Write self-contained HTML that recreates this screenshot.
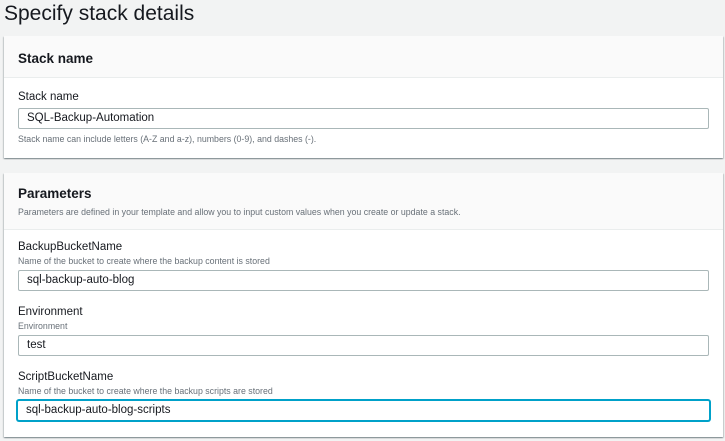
<!DOCTYPE html>
<html><head><style>
*{margin:0;padding:0;box-sizing:border-box}
body{width:725px;height:441px;background:#f2f3f3;font-family:"Liberation Sans",sans-serif;color:#16191f;position:relative;overflow:hidden}
.a{position:absolute;white-space:nowrap}
.card{position:absolute;left:4px;width:719px;background:#fff;box-shadow:0 1px 1px rgba(0,28,36,.3),1px 1px 1px rgba(0,28,36,.15),-1px 1px 1px rgba(0,28,36,.15)}
.hd{position:absolute;left:0;top:0;width:100%;background:#fafafa;border-bottom:1px solid #eaeded}
.inp{position:absolute;left:14px;width:691px;height:21px;border:1px solid #aab7b8;border-radius:2px;font-size:11.5px;padding:3px 0 0 8px;background:#fff}
.lb{font-size:11.5px}
.ds{font-size:8.8px;color:#687078}
h2{font-size:13.5px;font-weight:bold}
</style></head><body>
<div class="a" style="left:4px;top:2px;font-size:21px;color:#16191f">Specify stack details</div>
<div class="card" style="top:36px;height:122px">
<div class="hd" style="height:42px"></div>
<h2 class="a" style="left:14px;top:15px">Stack name</h2>
<div class="a lb" style="left:14px;top:55px">Stack name</div>
<div class="inp" style="top:72px">SQL-Backup-Automation</div>
<div class="a ds" style="left:14px;top:98px">Stack name can include letters (A-Z and a-z), numbers (0-9), and dashes (-).</div>
</div>
<div class="card" style="top:173px;height:264px">
<div class="hd" style="height:57px"></div>
<h2 class="a" style="left:14px;top:13px">Parameters</h2>
<div class="a ds" style="left:14px;top:34px">Parameters are defined in your template and allow you to input custom values when you create or update a stack.</div>
<div class="a lb" style="left:14px;top:68px">BackupBucketName</div>
<div class="a ds" style="left:14px;top:83px">Name of the bucket to create where the backup content is stored</div>
<div class="inp" style="top:97px">sql-backup-auto-blog</div>
<div class="a lb" style="left:14px;top:133px">Environment</div>
<div class="a ds" style="left:14px;top:148px">Environment</div>
<div class="inp" style="top:162px">test</div>
<div class="a lb" style="left:14px;top:198px">ScriptBucketName</div>
<div class="a ds" style="left:14px;top:213px">Name of the bucket to create where the backup scripts are stored</div>
<div class="inp" style="top:227px;left:13px;width:693px;border:1px solid #00a1c9;box-shadow:0 0 0 1px #00a1c9">sql-backup-auto-blog-scripts</div>
</div>
</body></html>
